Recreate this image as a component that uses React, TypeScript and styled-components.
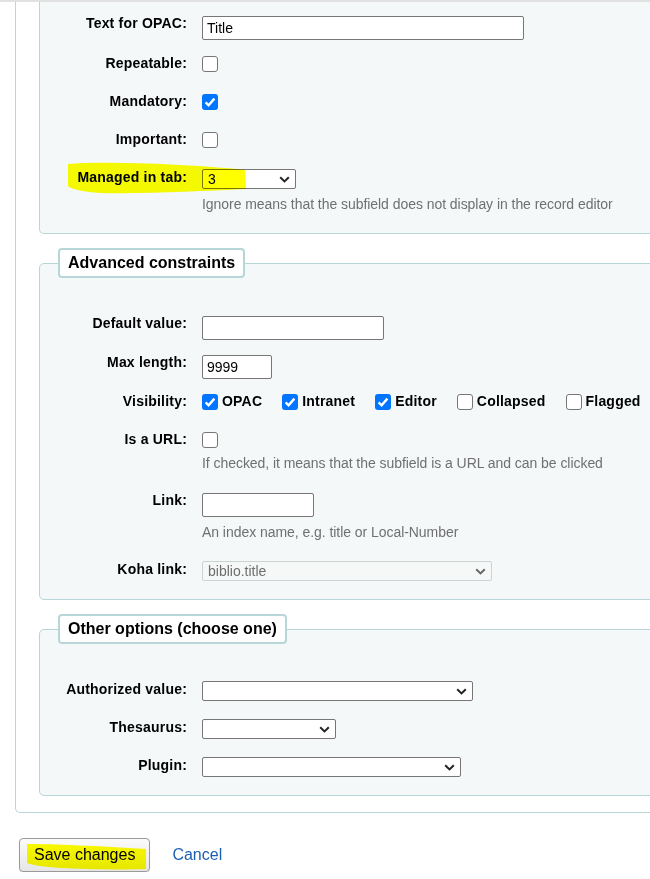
import styled, { createGlobalStyle, css } from 'styled-components'

const GlobalStyle = createGlobalStyle`
  html, body {
    margin: 0;
    padding: 0;
    background: #fff;
    overflow: hidden;
  }
  body {
    font-family: "Liberation Sans", Arial, sans-serif;
    font-size: 14px;
    color: #000;
  }
`

const teal = '#b8d6d8'
const font = '"Liberation Sans", Arial, sans-serif'

const TopBar = styled.div`
  height: 2px;
  background: #e1e1e1;
`

const Page = styled.div`
  width: 760px;
  padding-left: 15px;
`

const Outer = styled.div`
  border: 1px solid ${teal};
  border-top: none;
  border-right: none;
  border-radius: 0 0 0 5px;
  padding: 0 0 16px 23px;
`

const Fieldset = styled.fieldset<{ $open?: boolean }>`
  margin: 0 0 14px;
  padding: 36px 0 1px;
  min-width: 0;
  border: 1px solid ${teal};
  border-radius: 5px;
  background: #f4f8f9;

  &:last-child {
    margin-bottom: 0;
  }

  ${(p) =>
    p.$open &&
    css`
      border-top: none;
      border-radius: 0 0 5px 5px;
      padding-top: 12px;
    `}
`

const Legend = styled.legend`
  margin-left: 18px;
  padding: 4px 8px;
  border: 2px solid ${teal};
  border-radius: 4px;
  background: #fff;
  font-size: 16px;
  font-weight: bold;
  line-height: 18px;
`

const Row = styled.div<{ $h?: number; $help?: boolean }>`
  position: relative;
  display: grid;
  grid-template-columns: 147px 1fr;
  column-gap: 15px;
  align-items: start;
  min-height: ${(p) => (p.$help ? 0 : p.$h ?? 38)}px;
  padding-bottom: ${(p) => (p.$help ? 20 : 0)}px;
`

const Label = styled.label`
  padding-top: 1px;
  font-weight: bold;
  text-align: right;
  line-height: 16px;
  letter-spacing: 0.2px;
  white-space: nowrap;
`

const Field = styled.div`
  display: flex;
  flex-direction: column;
  align-items: flex-start;
`

const TextInput = styled.input<{ $w: number }>`
  box-sizing: border-box;
  width: ${(p) => p.$w}px;
  height: 24px;
  margin: 2px 0 0;
  padding: 0 4px;
  border: 1px solid #767676;
  border-radius: 2px;
  background: #fff;
  color: #000;
  font: 14px ${font};
  outline: none;
`

const SelectBox = styled.div<{ $w: number; $disabled?: boolean }>`
  box-sizing: border-box;
  width: ${(p) => p.$w}px;
  height: 20px;
  margin-top: 1px;
  padding: 0 5px;
  display: flex;
  align-items: center;
  justify-content: space-between;
  border: 1px solid ${(p) => (p.$disabled ? '#cdd2d3' : '#767676')};
  border-radius: 2px;
  background: ${(p) => (p.$disabled ? '#f6f8f8' : '#fff')};
  color: ${(p) => (p.$disabled ? '#6d6d6d' : '#000')};
  line-height: 16px;
`

const Box = styled.span<{ $on?: boolean }>`
  box-sizing: border-box;
  flex: none;
  width: 16px;
  height: 16px;
  margin-top: 2px;
  display: inline-flex;
  align-items: center;
  justify-content: center;
  border: ${(p) => (p.$on ? 'none' : '1px solid #767676')};
  border-radius: 3px;
  background: ${(p) => (p.$on ? '#0075ff' : '#fff')};
`

const Help = styled.div`
  margin-top: 7px;
  line-height: 16px;
  color: #707070;
  letter-spacing: -0.05px;
  white-space: nowrap;
`

const Options = styled.div`
  display: flex;
  gap: 20px;
`

const Option = styled.label`
  display: flex;
  align-items: flex-start;
  gap: 4px;
  padding-top: 1px;
  font-weight: bold;
  line-height: 16px;
  letter-spacing: 0.2px;
  white-space: nowrap;

  & > span {
    margin-top: 1px;
  }
`

const Actions = styled.div`
  display: flex;
  align-items: center;
  gap: 22px;
  margin: 25px 0 0 4px;
`

const Button = styled.button`
  position: relative;
  height: 34px;
  padding: 0 14px;
  border: 1px solid #9a9a9a;
  border-radius: 4px;
  background: linear-gradient(#fbfbfb, #e6e6e6);
  box-shadow: 0 1px 1px rgba(0, 0, 0, 0.12);
  color: #000;
  font: 16px ${font};
`

const CancelLink = styled.a`
  color: #1d5fb0;
  font-size: 16px;
  text-decoration: none;
`

const Marker = styled.svg<{ $x: number; $y: number }>`
  position: absolute;
  left: ${(p) => p.$x}px;
  top: ${(p) => p.$y}px;
  pointer-events: none;
  mix-blend-mode: multiply;
  overflow: visible;
`

function Chevron({ color = '#222' }: { color?: string }) {
  return (
    <svg width="11" height="7" viewBox="0 0 11 7">
      <path d="M1.2 1.2 L5.5 5.4 L9.8 1.2" fill="none" stroke={color} strokeWidth="2" />
    </svg>
  )
}

function Check({ on }: { on?: boolean }) {
  return (
    <Box $on={on}>
      {on && (
        <svg width="16" height="16" viewBox="0 0 16 16">
          <path d="M3.6 8.4 L6.6 11.3 L12.4 4.6" fill="none" stroke="#fff" strokeWidth="2.4" />
        </svg>
      )}
    </Box>
  )
}

function Select({ w, value = '', disabled }: { w: number; value?: string; disabled?: boolean }) {
  return (
    <SelectBox $w={w} $disabled={disabled}>
      <span>{value}</span>
      <Chevron color={disabled ? '#666' : '#222'} />
    </SelectBox>
  )
}

export default function App() {
  return (
    <>
      <GlobalStyle />
      <TopBar />
      <Page>
        <Outer>
          <Fieldset $open>
            <Row $h={40}>
              <Label>Text for OPAC:</Label>
              <Field>
                <TextInput $w={322} defaultValue="Title" readOnly />
              </Field>
            </Row>
            <Row>
              <Label>Repeatable:</Label>
              <Field>
                <Check />
              </Field>
            </Row>
            <Row>
              <Label>Mandatory:</Label>
              <Field>
                <Check on />
              </Field>
            </Row>
            <Row>
              <Label>Important:</Label>
              <Field>
                <Check />
              </Field>
            </Row>
            <Row $help>
              <Label>Managed in tab:</Label>
              <Field>
                <Select w={94} value="3" />
                <Help>Ignore means that the subfield does not display in the record editor</Help>
              </Field>
              <Marker $x={0} $y={-10} width="220" height="45">
                <path
                  d="M28 6 C60 3 150 6 205 12 L206 31 C160 33 110 36 60 35 C45 34 30 31 28 28 Z"
                  fill="#ffff00"
                />
              </Marker>
            </Row>
          </Fieldset>

          <Fieldset>
            <Legend>Advanced constraints</Legend>
            <Row $h={39}>
              <Label>Default value:</Label>
              <Field>
                <TextInput $w={182} readOnly />
              </Field>
            </Row>
            <Row $h={39}>
              <Label>Max length:</Label>
              <Field>
                <TextInput $w={70} defaultValue="9999" readOnly />
              </Field>
            </Row>
            <Row>
              <Label>Visibility:</Label>
              <Options>
                <Option>
                  <Check on />
                  OPAC
                </Option>
                <Option>
                  <Check on />
                  Intranet
                </Option>
                <Option>
                  <Check on />
                  Editor
                </Option>
                <Option>
                  <Check />
                  Collapsed
                </Option>
                <Option>
                  <Check />
                  Flagged
                </Option>
              </Options>
            </Row>
            <Row $help>
              <Label>Is a URL:</Label>
              <Field>
                <Check />
                <Help>If checked, it means that the subfield is a URL and can be clicked</Help>
              </Field>
            </Row>
            <Row $help>
              <Label>Link:</Label>
              <Field>
                <TextInput $w={112} readOnly />
                <Help>An index name, e.g. title or Local-Number</Help>
              </Field>
            </Row>
            <Row>
              <Label>Koha link:</Label>
              <Field>
                <Select w={290} value="biblio.title" disabled />
              </Field>
            </Row>
          </Fieldset>

          <Fieldset>
            <Legend>Other options (choose one)</Legend>
            <Row>
              <Label>Authorized value:</Label>
              <Field>
                <Select w={271} />
              </Field>
            </Row>
            <Row>
              <Label>Thesaurus:</Label>
              <Field>
                <Select w={134} />
              </Field>
            </Row>
            <Row>
              <Label>Plugin:</Label>
              <Field>
                <Select w={259} />
              </Field>
            </Row>
          </Fieldset>
        </Outer>

        <Actions>
          <Button type="button">
            Save changes
            <Marker $x={0} $y={0} width="130" height="34">
              <path
                d="M7 5 C30 5 80 7 126 10 L126 30 C100 31 60 30 40 29 C25 28 12 26 7 24 Z"
                fill="#ffff00"
              />
            </Marker>
          </Button>
          <CancelLink href="#">Cancel</CancelLink>
        </Actions>
      </Page>
    </>
  )
}
